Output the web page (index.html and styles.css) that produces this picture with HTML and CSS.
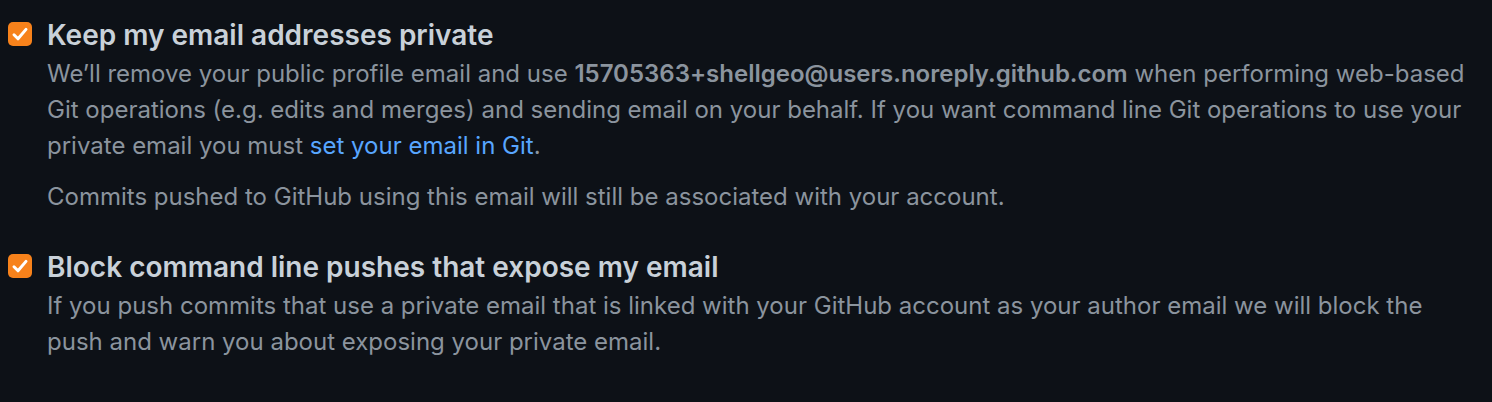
FILE: index.html
```html
<!DOCTYPE html>
<html lang="en">
<head>
<meta charset="utf-8">
<title>Email privacy</title>
<link rel="stylesheet" href="styles.css">
</head>
<body>
<div class="settings">
  <div class="option">
    <span class="checkbox"><svg viewBox="0 0 24 24" width="24" height="24"><path d="M6 12.8l4 4 8-9.4" fill="none" stroke="#fff" stroke-width="3" stroke-linecap="round" stroke-linejoin="round"/></svg></span>
    <div class="body">
      <div class="title">Keep my email addresses private</div>
      <p class="note">We’ll remove your public profile email and use <strong>15705363+shellgeo@users.noreply.github.com</strong> when performing web-based Git operations (e.g. edits and merges) and sending email on your behalf. If you want command line Git operations to use your private email you must <a href="#">set your email in Git</a>.</p>
      <p class="note">Commits pushed to GitHub using this email will still be associated with your account.</p>
    </div>
  </div>
  <div class="option">
    <span class="checkbox"><svg viewBox="0 0 24 24" width="24" height="24"><path d="M6 12.8l4 4 8-9.4" fill="none" stroke="#fff" stroke-width="3" stroke-linecap="round" stroke-linejoin="round"/></svg></span>
    <div class="body">
      <div class="title">Block command line pushes that expose my email</div>
      <p class="note">If you push commits that use a private email that is linked with your GitHub account as your author email we will block the push and warn you about exposing your private email.</p>
    </div>
  </div>
</div>
</body>
</html>
```
FILE: styles.css
```css
html, body {
  margin: 0;
  background: #0d1117;
}
body {
  padding: 17px 8px 8px;
  font-family: Inter, "Liberation Sans", sans-serif;
  color: #8b949e;
}
.settings {
  width: 1470px;
  display: flex;
  flex-direction: column;
  gap: 34px;
}
.option {
  display: flex;
  gap: 15px;
  align-items: flex-start;
}
.checkbox {
  flex: none;
  width: 24px;
  height: 24px;
  margin-top: 5px;
  border-radius: 5px;
  background: #f7821b;
  display: block;
}
.checkbox svg { display: block; }
.body {
  flex: 1;
  min-width: 0;
}
.title {
  font-size: 28px;
  font-weight: 600;
  line-height: 36px;
  color: #c9d1d9;
}
.note {
  margin: 3px 0 0;
  font-size: 24px;
  line-height: 36px;
}
.note + .note {
  margin-top: 15px;
}
.note strong {
  font-weight: 600;
}
.note a {
  color: #58a6ff;
  text-decoration: none;
}
```
